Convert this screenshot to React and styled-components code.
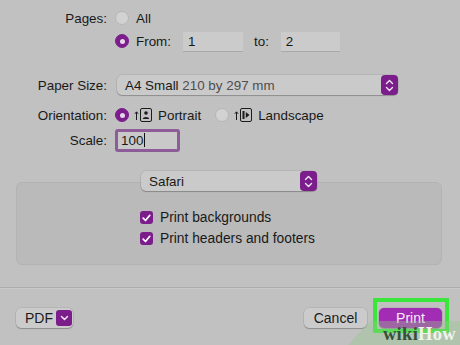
import React from 'react';
import styled, { createGlobalStyle } from 'styled-components';

const GlobalStyle = createGlobalStyle`
  html, body {
    margin: 0;
    padding: 0;
    background: #c1c1c1;
  }
  body {
    font-family: "Liberation Sans", Arial, sans-serif;
    font-size: 13.4px;
    color: #191919;
  }
`;

const PURPLE = '#7b1e8c';

const Window = styled.div`
  position: relative;
  width: 460px;
  height: 345px;
  overflow: hidden;
  background: #c1c1c1;
  display: flex;
  flex-direction: column;
`;

const Form = styled.div`
  padding-top: 8px;
  display: flex;
  flex-direction: column;
`;

const Row = styled.div`
  display: grid;
  grid-template-columns: 107px 1fr;
  column-gap: 8px;
  align-items: center;
  height: ${(p) => p.$h || 20}px;
  margin-top: ${(p) => p.$mt || 0}px;
`;

const Label = styled.div`
  text-align: right;
  white-space: nowrap;
`;

const Controls = styled.div`
  display: flex;
  align-items: center;
  white-space: nowrap;
`;

const Radio = styled.span`
  box-sizing: border-box;
  width: 14px;
  height: 14px;
  border-radius: 50%;
  flex: none;
  margin-left: ${(p) => p.$ml || 0}px;
  background: ${(p) => (p.$on ? PURPLE : '#d2d2d2')};
  border: 1px solid ${(p) => (p.$on ? PURPLE : '#b6b6b6')};
  display: flex;
  align-items: center;
  justify-content: center;
  &::after {
    content: '';
    width: 5px;
    height: 5px;
    border-radius: 50%;
    background: ${(p) => (p.$on ? '#e6d6ea' : 'transparent')};
  }
`;

const Text = styled.span`
  margin-left: ${(p) => p.$ml || 0}px;
  color: ${(p) => (p.$muted ? '#4e4e4e' : 'inherit')};
`;

const Field = styled.div`
  box-sizing: border-box;
  width: ${(p) => p.$w || 60}px;
  height: 19px;
  margin-left: ${(p) => p.$ml || 0}px;
  padding-left: 5px;
  background: #cbcbcb;
  box-shadow: 0 1px 0 #a9a9a9;
  display: flex;
  align-items: center;
`;

const ScaleField = styled.div`
  box-sizing: border-box;
  width: 65px;
  height: 23px;
  padding-left: 3px;
  background: #c9c9c9;
  border: 3px solid #8c5d98;
  border-radius: 3px;
  display: flex;
  align-items: center;
`;

const Caret = styled.span`
  display: inline-block;
  width: 1px;
  height: 14px;
  background: #111;
  margin-left: 1px;
`;

const Popup = styled.div`
  box-sizing: border-box;
  width: ${(p) => p.$w}px;
  height: 20px;
  margin-left: ${(p) => p.$ml || 0}px;
  padding-left: 8px;
  background: #cacaca;
  border-radius: 5px;
  box-shadow: 0 1px 1px rgba(0, 0, 0, 0.22), 0 0 0 0.5px rgba(0, 0, 0, 0.12);
  display: flex;
  align-items: center;
  justify-content: space-between;
`;

const Stepper = styled.span`
  width: 17px;
  height: 20px;
  border-radius: 4px;
  background: ${PURPLE};
  display: flex;
  align-items: center;
  justify-content: center;
  flex: none;
`;

const Group = styled.div`
  box-sizing: border-box;
  margin: 30px 18px 0 16px;
  height: 83px;
  background: #bababa;
  border: 1px solid #b3b3b3;
  border-radius: 6px;
  display: flex;
  flex-direction: column;
  align-items: center;
`;

const GroupPopup = styled(Popup)`
  margin-top: -12px;
`;

const Checks = styled.div`
  align-self: stretch;
  padding-left: 123px;
  margin-top: 20px;
  display: flex;
  flex-direction: column;
`;

const CheckRow = styled.div`
  height: 21px;
  display: flex;
  align-items: flex-start;
`;

const Check = styled.span`
  width: 13px;
  height: 13px;
  border-radius: 3px;
  background: ${PURPLE};
  display: flex;
  align-items: center;
  justify-content: center;
  flex: none;
  margin-right: 7px;
`;

const CheckText = styled.span`
  line-height: 13px;
  font-size: 13.8px;
`;

const Separator = styled.div`
  margin-top: 22px;
  height: 1px;
  background: #acacac;
  box-shadow: 0 1px 0 #c9c9c9;
`;

const Footer = styled.div`
  display: flex;
  justify-content: space-between;
  align-items: center;
  padding: 20px 18px 0 16px;
`;

const Buttons = styled.div`
  display: flex;
  gap: 12px;
`;

const Button = styled.div`
  box-sizing: border-box;
  position: relative;
  width: ${(p) => p.$w}px;
  height: 20px;
  border-radius: 5px;
  display: flex;
  align-items: center;
  justify-content: ${(p) => (p.$left ? 'space-between' : 'center')};
  padding: ${(p) => (p.$left ? '0 1px 0 9px' : '0')};
  font-size: 14px;
  background: ${(p) => (p.$primary ? '#a22db4' : '#cbcbcb')};
  color: ${(p) => (p.$primary ? '#fbeefd' : '#1c1c1c')};
  box-shadow: 0 1px 1px rgba(0, 0, 0, 0.22), 0 0 0 0.5px rgba(0, 0, 0, 0.12);
`;

const Chevron = styled.span`
  width: 16px;
  height: 16px;
  border-radius: 3px;
  background: ${PURPLE};
  display: flex;
  align-items: center;
  justify-content: center;
`;

const Highlight = styled.span`
  position: absolute;
  left: -6px;
  right: -7px;
  top: -10px;
  bottom: -5px;
  border: 4px solid #3be63b;
  pointer-events: none;
`;

const Watermark = styled.div`
  position: absolute;
  right: 0;
  bottom: 0;
  width: 112px;
  height: 24px;
  display: flex;
  align-items: flex-end;
  justify-content: flex-end;
  padding-right: 4px;
  box-sizing: border-box;
  background: rgba(150, 200, 140, 0.38);
  clip-path: polygon(20% 0, 100% 0, 100% 100%, 0 100%);
  font-family: "Liberation Serif", "DejaVu Serif", serif;
  font-weight: bold;
  font-size: 18.5px;
  line-height: 21px;
  letter-spacing: 0.3px;
`;

const Wiki = styled.span`
  color: #34503a;
`;

const How = styled.span`
  color: #eef3ec;
`;

const StepIcon = () => (
  <svg width="9" height="13" viewBox="0 0 9 13" fill="none" stroke="#f3e6f6" strokeWidth="1.4" strokeLinecap="round" strokeLinejoin="round">
    <path d="M1.5 4.5 L4.5 1.5 L7.5 4.5" />
    <path d="M1.5 8.5 L4.5 11.5 L7.5 8.5" />
  </svg>
);

const DownIcon = () => (
  <svg width="9" height="6" viewBox="0 0 9 6" fill="none" stroke="#f3e6f6" strokeWidth="1.5" strokeLinecap="round" strokeLinejoin="round">
    <path d="M1.5 1.5 L4.5 4.5 L7.5 1.5" />
  </svg>
);

const CheckIcon = () => (
  <svg width="9" height="8" viewBox="0 0 9 8" fill="none" stroke="#fff" strokeWidth="1.7" strokeLinecap="round" strokeLinejoin="round">
    <path d="M1.2 4.2 L3.5 6.5 L7.8 1.3" />
  </svg>
);

const OrientIcon = styled.svg`
  margin-left: 5px;
  flex: none;
`;

const PortraitIcon = () => (
  <OrientIcon width="19" height="14" viewBox="0 0 19 14">
    <path d="M2.5 12 V4 M0.8 5.8 L2.5 3.8 L4.2 5.8" stroke="#1c1c1c" strokeWidth="1" fill="none" />
    <rect x="6.5" y="0.5" width="11" height="13" rx="1.5" fill="none" stroke="#1c1c1c" strokeWidth="1" />
    <circle cx="12" cy="5" r="1.8" fill="#1c1c1c" />
    <path d="M8.8 11 C8.8 8.3 15.2 8.3 15.2 11 Z" fill="#1c1c1c" />
  </OrientIcon>
);

const LandscapeIcon = () => (
  <OrientIcon width="19" height="14" viewBox="0 0 19 14">
    <path d="M2.5 12 V4 M0.8 5.8 L2.5 3.8 L4.2 5.8" stroke="#1c1c1c" strokeWidth="1" fill="none" />
    <rect x="6.5" y="0.5" width="11" height="13" rx="1.5" fill="none" stroke="#1c1c1c" strokeWidth="1" />
    <rect x="8.5" y="3" width="2" height="8" fill="#1c1c1c" />
    <path d="M11.8 4 L15.5 7 L11.8 10 Z" fill="#1c1c1c" />
  </OrientIcon>
);

const App = () => (
  <Window>
    <GlobalStyle />
    <Form>
      <Row>
        <Label>Pages:</Label>
        <Controls>
          <Radio />
          <Text $ml={7}>All</Text>
        </Controls>
      </Row>
      <Row $mt={3}>
        <Label />
        <Controls>
          <Radio $on />
          <Text $ml={7}>From:</Text>
          <Field $ml={12}>1</Field>
          <Text $ml={11}>to:</Text>
          <Field $ml={12} $w={59}>2</Field>
        </Controls>
      </Row>
      <Row $mt={24}>
        <Label>Paper Size:</Label>
        <Controls>
          <Popup $w={281} $ml={2}>
            <span>
              A4 Small <Text $muted>210 by 297 mm</Text>
            </span>
            <Stepper>
              <StepIcon />
            </Stepper>
          </Popup>
        </Controls>
      </Row>
      <Row $mt={10}>
        <Label>Orientation:</Label>
        <Controls>
          <Radio $on />
          <PortraitIcon />
          <Text $ml={5}>Portrait</Text>
          <Radio $ml={14} />
          <LandscapeIcon />
          <Text $ml={5}>Landscape</Text>
        </Controls>
      </Row>
      <Row $mt={3} $h={24}>
        <Label>Scale:</Label>
        <Controls>
          <ScaleField>
            100<Caret />
          </ScaleField>
        </Controls>
      </Row>
    </Form>

    <Group>
      <GroupPopup $w={176}>
        <span>Safari</span>
        <Stepper>
          <StepIcon />
        </Stepper>
      </GroupPopup>
      <Checks>
        <CheckRow>
          <Check>
            <CheckIcon />
          </Check>
          <CheckText>Print backgrounds</CheckText>
        </CheckRow>
        <CheckRow>
          <Check>
            <CheckIcon />
          </Check>
          <CheckText>Print headers and footers</CheckText>
        </CheckRow>
      </Checks>
    </Group>

    <Separator />

    <Footer>
      <Button $w={57} $left>
        PDF
        <Chevron>
          <DownIcon />
        </Chevron>
      </Button>
      <Buttons>
        <Button $w={63}>Cancel</Button>
        <Button $w={63} $primary>
          Print
          <Highlight />
        </Button>
      </Buttons>
    </Footer>

    <Watermark>
      <Wiki>wiki</Wiki>
      <How>How</How>
    </Watermark>
  </Window>
);

export default App;
